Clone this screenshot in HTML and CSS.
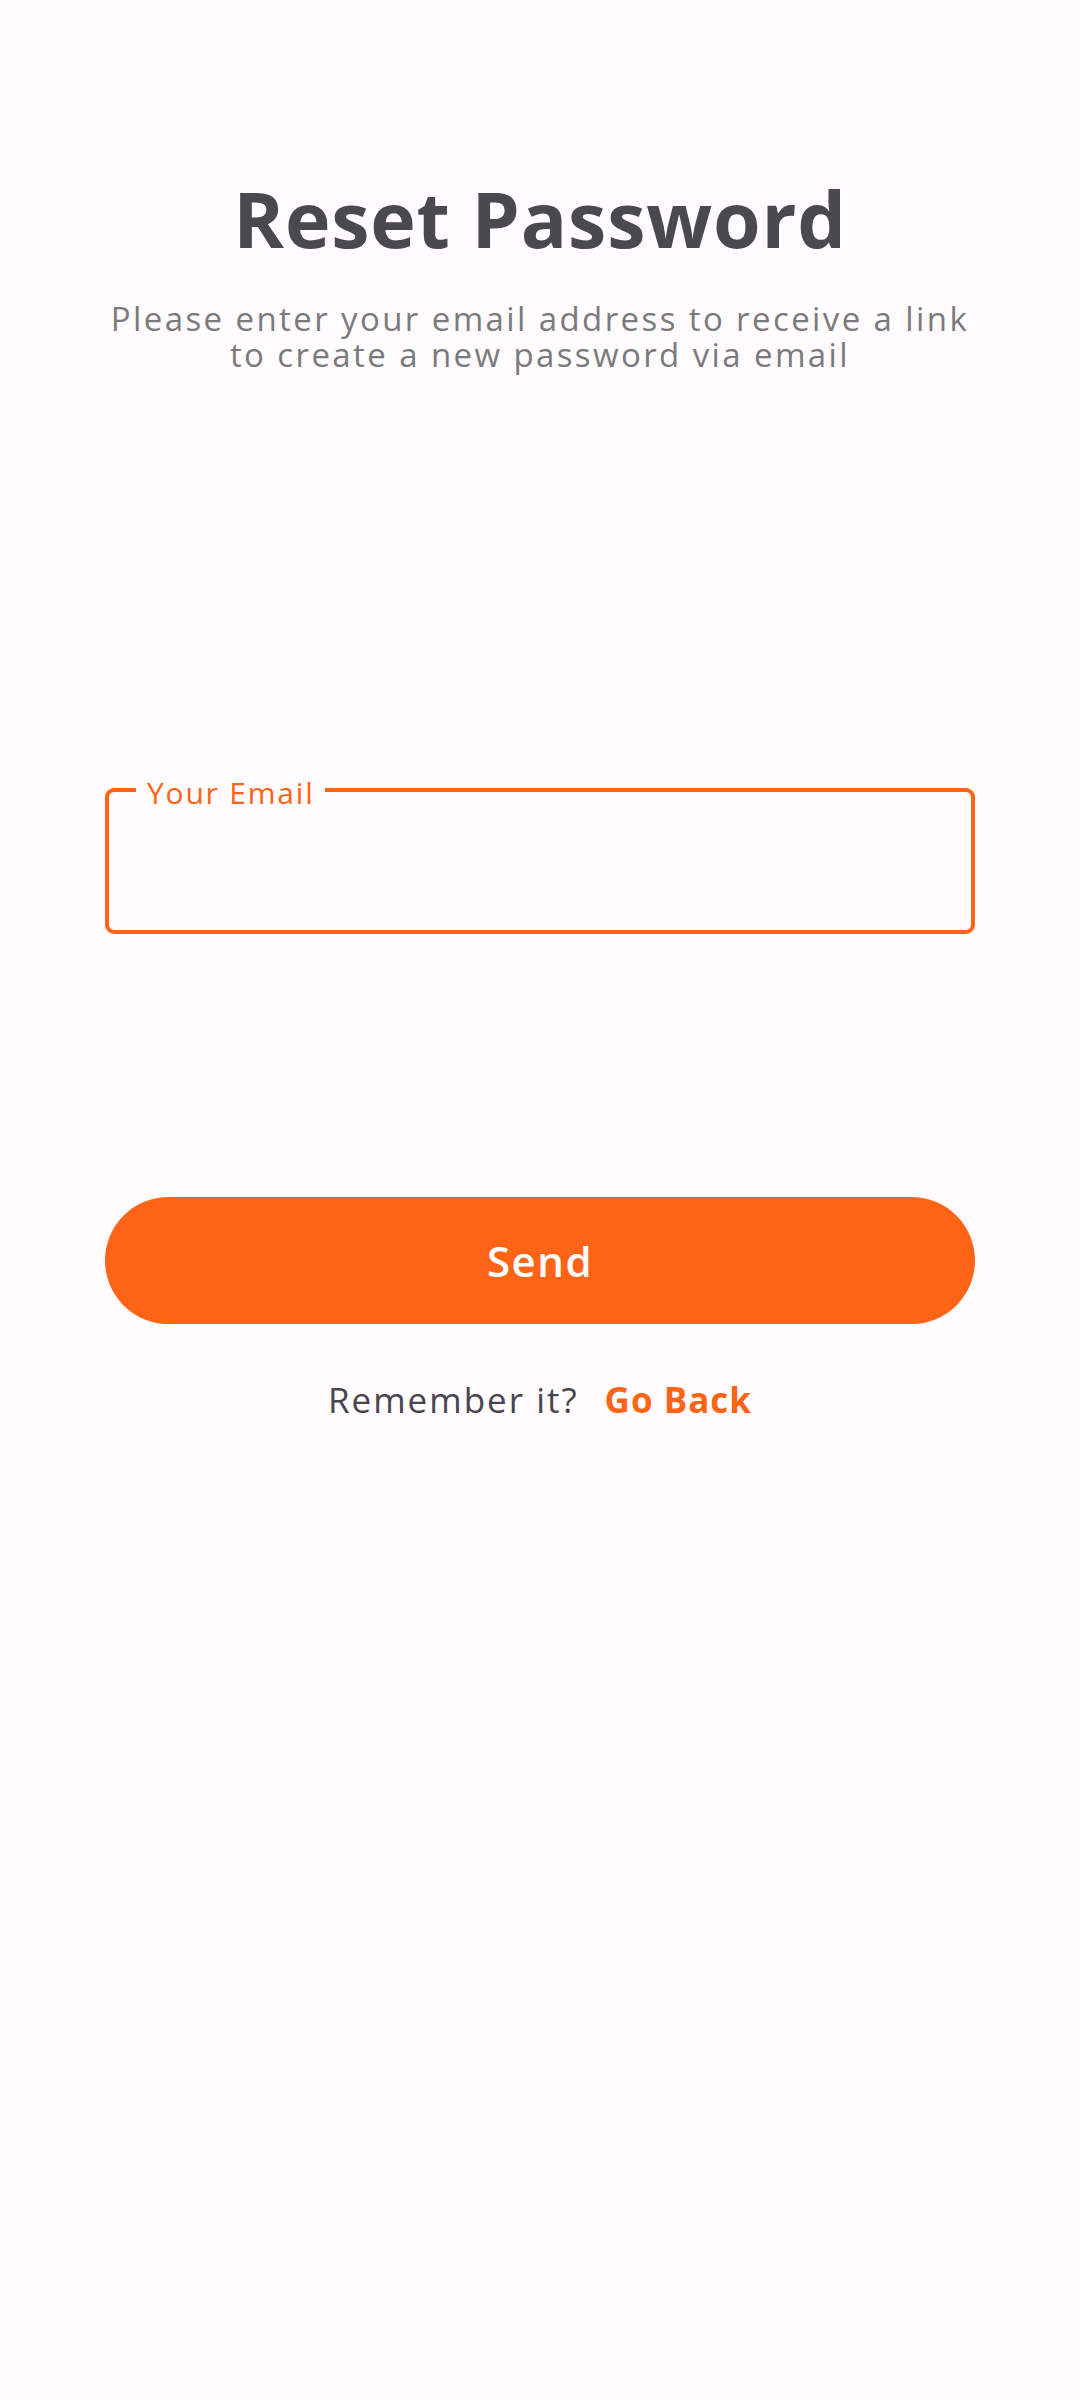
FILE: index.html
```html
<!DOCTYPE html>
<html lang="en">
<head>
<meta charset="utf-8">
<title>Reset Password</title>
<link rel="stylesheet" href="styles.css">
</head>
<body>
<main class="screen">
  <h1 class="title">Reset Password</h1>
  <p class="subtitle">Please enter your email address to receive a link<br>to create a new password via email</p>
  <div class="field">
    <span class="field-label">Your Email</span>
    <input class="field-input" type="email" aria-label="Your Email">
  </div>
  <button class="send-btn" type="button">Send</button>
  <div class="remember">
    <span class="remember-text">Remember it?</span>
    <a class="go-back" href="#">Go Back</a>
  </div>
</main>
</body>
</html>
```
FILE: styles.css
```css
html, body {
  margin: 0;
  padding: 0;
  background: #fffbfe;
}
body {
  width: 1080px;
  height: 2400px;
  font-family: "Open Sans", "Noto Sans", sans-serif;
}
.screen {
  display: flex;
  flex-direction: column;
  align-items: stretch;
  padding: 0 105px;
}
.title {
  margin: 172px 0 0;
  font-size: 77px;
  line-height: 94px;
  font-weight: 700;
  color: #4a4a4c;
  text-align: center;
  letter-spacing: 0.8px;
}
.subtitle {
  margin: 35px 0 0;
  font-size: 33px;
  line-height: 36px;
  color: #7a7a7c;
  text-align: center;
  letter-spacing: 2.4px;
  white-space: nowrap;
}
.field {
  position: relative;
  margin-top: 415px;
  height: 146px;
  box-sizing: border-box;
  border: 4px solid #fe6416;
  border-radius: 9px;
}
.field-label {
  position: absolute;
  left: 27px;
  top: -19px;
  padding: 0 10px 0 11px;
  background: #fffbfe;
  color: #fe6416;
  font-size: 30px;
  line-height: 40px;
  letter-spacing: 1.8px;
}
.field-input {
  width: 100%;
  height: 100%;
  box-sizing: border-box;
  border: 0;
  background: transparent;
  outline: none;
  padding: 0 36px;
  font: inherit;
  font-size: 34px;
}
.send-btn {
  margin-top: 263px;
  height: 127px;
  border: 0;
  border-radius: 64px;
  background: #fe6416;
  color: #ffffff;
  font-family: inherit;
  font-size: 42px;
  font-weight: 600;
  letter-spacing: 1.5px;
}
.remember {
  display: flex;
  justify-content: center;
  align-items: baseline;
  gap: 26px;
  margin-top: 52px;
  font-size: 35px;
  line-height: 48px;
}
.remember-text {
  color: #49454f;
  letter-spacing: 2px;
}
.go-back {
  color: #fe6416;
  font-weight: 700;
  text-decoration: none;
  letter-spacing: 1px;
}
```
